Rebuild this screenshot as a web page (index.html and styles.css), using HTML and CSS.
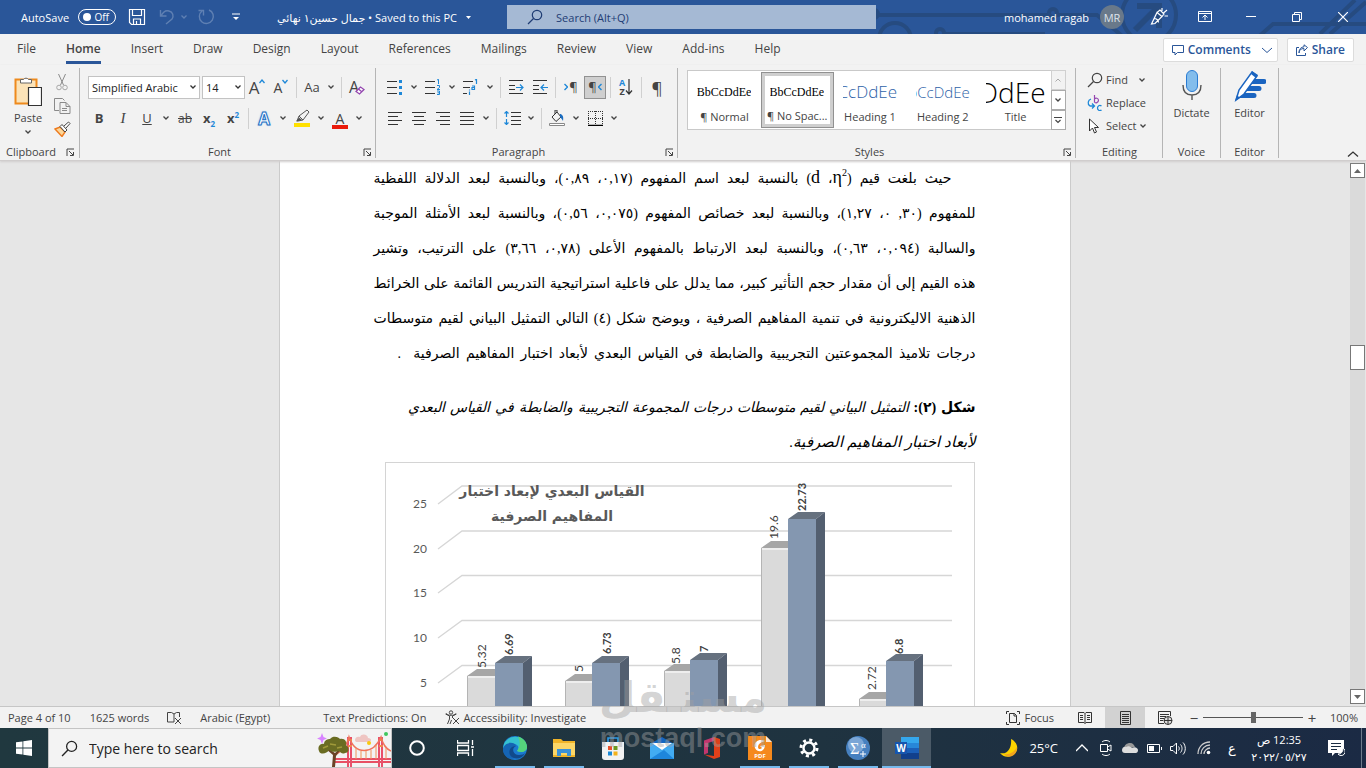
FILE: index.html
```html
<!DOCTYPE html>
<html lang="en">
<head>
<meta charset="utf-8">
<meta name="viewport" content="width=device-width, initial-scale=1.0">
<title>جمال حسين١ نهائي - Word</title>
<link rel="stylesheet" href="styles.css">
</head>
<body>
<svg class="defs" aria-hidden="true">
	<symbol id="chev" viewBox="0 0 8 8"><path d="M1.500 2.500L4 5l2.500-2.500" fill="none" stroke="currentColor" stroke-width="1.300"/></symbol>
	<symbol id="launch" viewBox="0 0 9 9"><path d="M1 8V1h7M3 3l4 4M7.500 4v3.500H4" fill="none" stroke="currentColor"/></symbol>
	<symbol id="glass" viewBox="0 0 16 16"><path d="M1 15l5.500-5.500" fill="none" stroke="currentColor" stroke-width="1.300"/><circle cx="10" cy="6" r="4.700" fill="none" stroke="currentColor" stroke-width="1.200"/></symbol>
</svg>

<header class="titlebar">
	<svg class="circuit" viewBox="0 0 491 34" aria-hidden="true">
		<g fill="none" stroke="#264b80" stroke-width="4">
			<circle cx="-1" cy="14" r="4"/><path d="M4 15h170M182 15h40l30 25"/><circle cx="178" cy="13" r="4"/>
			<circle cx="20" cy="39" r="16"/><circle cx="65" cy="33" r="4"/><path d="M70 34h100"/>
			<circle cx="274" cy="15" r="27"/><path d="M260 30l24-24M262 6h22v22" stroke-width="6"/>
			<path d="M380 40l18-16h93M445 34L480 0M455 34L491 2"/>
		</g>
	</svg>
	<label class="autosave">AutoSave <input type="checkbox" class="toggle-input"><span class="toggle"><i></i>Off</span></label>
	<button class="tb save" aria-label="Save"><svg width="18" height="18" viewBox="0 0 18 18"><path d="M1.500 1.500h15v15h-13l-2-2zM4.500 1.500v6h9v-6M5.500 16v-5h7v5M8.500 13v3" fill="none" stroke="#fff" stroke-width="1.200"/></svg></button>
	<button class="tb dim" aria-label="Undo"><svg width="16" height="18" viewBox="0 0 16 18"><path d="M1.500 2v6h6M2 8c2-4 5-6 8-5 4 1 5 5 3 8l-6 5" fill="none" stroke="currentColor" stroke-width="1.400"/></svg></button>
	<button class="tb dim" aria-label="Undo list"><svg width="8" height="8"><use href="#chev"/></svg></button>
	<button class="tb dim redo" aria-label="Redo"><svg width="18" height="18" viewBox="0 0 18 18"><path d="M12 2a7 7 0 1 1-7 1M1.500 2.500h5v5" fill="none" stroke="currentColor" stroke-width="1.400"/></svg></button>
	<button class="tb custom" aria-label="Customize toolbar"><svg width="8" height="8" viewBox="0 0 8 8"><path d="M0 1h8" stroke="#fff"/><path d="M1 4h6L4 7z" fill="#fff"/></svg></button>
	<button class="docname"><span>جمال حسين١ نهائي • Saved to this PC</span><svg width="7" height="5" viewBox="0 0 7 5"><path d="M1 1h5L3.500 4z" fill="#fff"/></svg></button>
	<label class="tellme"><svg width="16" height="16"><use href="#glass"/></svg><input type="text" placeholder="Search (Alt+Q)" aria-label="Search"></label>
	<div class="account">
		<span class="user">mohamed ragab</span>
		<button class="avatar">MR</button>
		<button class="win" aria-label="Coming soon"><svg width="18" height="18" viewBox="0 0 18 18"><path d="M1.500 16L7 4.500l5 4L5 15.500zM4.500 10.500c2 0 4 2 4 4M12 3V0M13.500 5L17 2M14.500 8H18M7 4.500L10 2l4 4-2 2.500" fill="none" stroke="#fff" stroke-width="1.200"/></svg></button>
		<button class="win" aria-label="Ribbon display options"><svg width="14" height="12" viewBox="0 0 14 12"><path d="M.5.5h13v10H.5zM.5 2.500h13M7 9V4.500M4.500 6.500L7 4l2.500 2.500" fill="none" stroke="#fff"/></svg></button>
		<button class="win" aria-label="Minimize"><svg width="10" height="10" viewBox="0 0 10 10"><path d="M0 4.500h10" stroke="#fff"/></svg></button>
		<button class="win" aria-label="Restore"><svg width="10" height="10" viewBox="0 0 10 10"><path d="M.5 2.500h7v7h-7zM2.500 2.500v-2h7v7h-2" fill="none" stroke="#fff"/></svg></button>
		<button class="win" aria-label="Close"><svg width="10" height="10" viewBox="0 0 10 10"><path d="M0 0l10 10M10 0L0 10" stroke="#fff" stroke-width="1.200"/></svg></button>
	</div>
</header>

<nav class="tabs">
	<a href="#">File</a>
	<a href="#" class="active">Home</a>
	<a href="#">Insert</a>
	<a href="#">Draw</a>
	<a href="#">Design</a>
	<a href="#">Layout</a>
	<a href="#">References</a>
	<a href="#">Mailings</a>
	<a href="#">Review</a>
	<a href="#">View</a>
	<a href="#">Add-ins</a>
	<a href="#">Help</a>
	<div class="tabs-right">
		<button class="pill"><svg width="12" height="12" viewBox="0 0 12 12"><path d="M.5 1.500h11v7h-6L3 11V8.500H.5z" fill="none" stroke="currentColor"/></svg>Comments<svg class="pill-chev" width="12" height="12" viewBox="0 0 12 12"><path d="M1 4l5 4.500L11 4" fill="none" stroke="currentColor"/></svg></button>
		<button class="pill"><svg width="12" height="12" viewBox="0 0 12 12"><path d="M3 3.500H.5v8h9V9M3 9c0-3 2-4.500 5-4.500V7l3.500-3.500L8 .8v2C5 3 3 5 3 9z" fill="none" stroke="currentColor"/></svg>Share</button>
	</div>
</nav>

<section class="ribbon">
	<div class="group clipboard">
		<div class="clip-body">
			<button class="big"><svg width="28" height="32" viewBox="0 0 28 32"><path d="M1.500 4.500h21v24h-21z" fill="#fbe3b8" stroke="#ee8a1d" stroke-width="2"/><path d="M6.500 8V4.500h3a3 3 0 0 1 5 0h3V8z" fill="#fff" stroke="#666"/><path d="M14.500 12.500h13v18h-13z" fill="#fff" stroke="#333" stroke-width="1.200"/></svg>Paste<svg width="8" height="8"><use href="#chev"/></svg></button>
			<div class="clip-small">
				<button class="ic" aria-label="Cut"><svg width="12" height="17" viewBox="0 0 12 17"><path d="M2.500 0l5 11M9.500 0l-5 11" stroke="#8a8a8a" fill="none"/><g fill="none" stroke="#a8a8a8"><circle cx="3" cy="13.500" r="2.300"/><circle cx="9" cy="13.500" r="2.300"/></g></svg></button>
				<button class="ic" aria-label="Copy"><svg width="17" height="16" viewBox="0 0 17 16"><path d="M5 12.500H.5V.5h8l2 2M6 4.500h6l4 4v7H6zM12 4.500v4h4M8 10.500h5M8 12.500h5" fill="none" stroke="#8a8a8a"/></svg></button>
				<button class="ic" aria-label="Format painter"><svg width="17" height="16" viewBox="0 0 17 16"><path d="M1 8l5-2 5 5-3 4.500z" fill="#fbd79a" stroke="#ee7a1d" stroke-width="1.400"/><path d="M6 5.500l2-2L13 9l-2 2zM10 5l4.500-4 1.500 1.500L12 7" fill="#fff" stroke="#444"/></svg></button>
			</div>
		</div>
		<div class="caption">Clipboard<button class="launch" aria-label="Clipboard settings"><svg width="9" height="9"><use href="#launch"/></svg></button></div>
	</div>

	<div class="group font">
		<div class="row">
			<select class="combo face" aria-label="Font"><option>Simplified Arabic</option></select>
			<select class="combo size" aria-label="Font size"><option>14</option></select>
			<button class="ic" aria-label="Grow font"><span class="letter-a">A</span><svg class="tick" width="6" height="5" viewBox="0 0 6 5"><path d="M.5 4L3 1l2.500 3" fill="none" stroke="#1e88d8" stroke-width="1.300"/></svg></button>
			<button class="ic" aria-label="Shrink font"><span class="letter-a small">A</span><svg class="tick" width="6" height="5" viewBox="0 0 6 5"><path d="M.5 1L3 4l2.500-3" fill="none" stroke="#1e88d8" stroke-width="1.300"/></svg></button>
			<i class="sep"></i>
			<button class="ic case">Aa</button><button class="dd" aria-label="Case options"><svg width="8" height="8"><use href="#chev"/></svg></button>
			<i class="sep"></i>
			<button class="ic" aria-label="Clear formatting"><span class="letter-a mid">A</span><svg class="eraser" width="10" height="9" viewBox="0 0 10 9"><path d="M1 5.500L5.500 1 9 3.500 4.500 8zM3.500 3L7 6" fill="#fff" stroke="#9447b0" stroke-width="1.300"/></svg></button>
		</div>
		<div class="row">
			<button class="ic"><b>B</b></button>
			<button class="ic ital"><i>I</i></button>
			<button class="ic"><u>U</u></button><button class="dd" aria-label="Underline style"><svg width="8" height="8"><use href="#chev"/></svg></button>
			<button class="ic"><s>ab</s></button>
			<button class="ic"><b>x<sub>2</sub></b></button>
			<button class="ic"><b>x<sup>2</sup></b></button>
			<i class="sep"></i>
			<button class="ic effect">A</button><button class="dd" aria-label="Effects"><svg width="8" height="8"><use href="#chev"/></svg></button>
			<button class="ic" aria-label="Highlight"><svg width="16" height="18" viewBox="0 0 16 18"><path d="M0 14h16v4H0z" fill="#ffe000"/><path d="M3 12l2-5 8-6 2 2-6 8-5 1zM5 7l4 4" fill="none" stroke="#555"/><path d="M2 12.500l3-4 3 2.500z" fill="#555"/></svg></button><button class="dd" aria-label="Highlight color"><svg width="8" height="8"><use href="#chev"/></svg></button>
			<button class="ic color">A</button><button class="dd" aria-label="Font color"><svg width="8" height="8"><use href="#chev"/></svg></button>
		</div>
		<div class="caption">Font<button class="launch" aria-label="Font settings"><svg width="9" height="9"><use href="#launch"/></svg></button></div>
	</div>

	<div class="group para">
		<div class="row">
			<button class="ic" aria-label="Bullets"><svg width="16" height="16" viewBox="0 0 16 16"><path d="M0 2.500h10M0 8.500h10M0 14.500h10" stroke="#333"/><path d="M12 1h3v3h-3zM12 7h3v3h-3zM12 13h3v3h-3z" fill="#1e88d8"/></svg></button><button class="dd" aria-label="Bullet styles"><svg width="8" height="8"><use href="#chev"/></svg></button>
			<button class="ic" aria-label="Numbering"><svg width="16" height="16" viewBox="0 0 16 16"><path d="M0 2.500h10M0 8.500h10M0 14.500h10" stroke="#333"/><path d="M12 1l1.500-.7V5M12 6.500h2.500v2L12 10.500h3M12 12h2.500v3.500H12M12.500 13.800h2" fill="none" stroke="#1e88d8"/></svg></button><button class="dd" aria-label="Number styles"><svg width="8" height="8"><use href="#chev"/></svg></button>
			<button class="ic" aria-label="Multilevel list"><svg width="16" height="16" viewBox="0 0 16 16"><path d="M0 2.500h10M0 8.500h7M0 14.500h4" stroke="#333"/><path d="M12 1l1.500-.7V5M9 7h2.500v3.500H9v-2h2.500M6.500 12.500V16M6.500 10.500v1" fill="none" stroke="#1e88d8" stroke-width="1.200"/></svg></button><button class="dd" aria-label="List styles"><svg width="8" height="8"><use href="#chev"/></svg></button>
			<i class="sep"></i>
			<button class="ic" aria-label="Increase indent"><svg width="15" height="14" viewBox="0 0 15 14"><path d="M0 .5h14M0 5.500h6M0 9.500h6M0 13.500h14" stroke="#333"/><path d="M7 7.500h7M11 4.500l3 3-3 3" fill="none" stroke="#1e88d8" stroke-width="1.200"/></svg></button>
			<button class="ic" aria-label="Decrease indent"><svg width="15" height="14" viewBox="0 0 15 14"><path d="M0 .5h14M0 5.500h6M0 9.500h6M0 13.500h14" stroke="#333"/><path d="M8 7.500h7M11 4.500l-3 3 3 3" fill="none" stroke="#1e88d8" stroke-width="1.200"/></svg></button>
			<i class="sep"></i>
			<button class="ic dir"><svg width="4" height="8" viewBox="0 0 4 8"><path d="M.5 1l3 3-3 3" fill="none" stroke="#1e88d8" stroke-width="1.400"/></svg>¶</button>
			<button class="ic dir on">¶<svg width="4" height="8" viewBox="0 0 4 8"><path d="M3.500 1l-3 3 3 3" fill="none" stroke="#1e88d8" stroke-width="1.400"/></svg></button>
			<i class="sep"></i>
			<button class="ic" aria-label="Sort"><span class="sort"><b>A</b><b>Z</b></span><svg width="8" height="18" viewBox="0 0 8 18"><path d="M4 1v15M1 12.500L4 16l3-3.500" fill="none" stroke="#333" stroke-width="1.200"/></svg></button>
			<i class="sep"></i>
			<button class="ic pilcrow">¶</button>
		</div>
		<div class="row">
			<button class="ic" aria-label="Align left"><svg width="14" height="13" viewBox="0 0 14 13"><path d="M0 .5h14M0 4.500h10M0 8.500h14M0 12.500h10" stroke="#333"/></svg></button>
			<button class="ic" aria-label="Center"><svg width="14" height="13" viewBox="0 0 14 13"><path d="M0 .5h14M2 4.500h10M0 8.500h14M2 12.500h10" stroke="#333"/></svg></button>
			<button class="ic" aria-label="Align right"><svg width="14" height="13" viewBox="0 0 14 13"><path d="M0 .5h14M4 4.500h10M0 8.500h14M4 12.500h10" stroke="#333"/></svg></button>
			<button class="ic" aria-label="Justify"><svg width="14" height="13" viewBox="0 0 14 13"><path d="M0 .5h14M0 4.500h14M0 8.500h14M0 12.500h14" stroke="#333"/></svg></button><button class="dd" aria-label="Justify options"><svg width="8" height="8"><use href="#chev"/></svg></button>
			<i class="sep"></i>
			<button class="ic" aria-label="Line spacing"><svg width="17" height="14" viewBox="0 0 17 14"><path d="M7 1.500h10M7 5.500h10M7 9.500h10M7 13.500h10" stroke="#333"/><path d="M2.500 0v6M.5 2.500l2-2 2 2M2.500 8v6M.5 11.500l2 2 2-2" fill="none" stroke="#1e88d8" stroke-width="1.200"/></svg></button><button class="dd" aria-label="Spacing options"><svg width="8" height="8"><use href="#chev"/></svg></button>
			<i class="sep"></i>
			<button class="ic" aria-label="Shading"><svg width="16" height="16" viewBox="0 0 16 16"><path d="M.5 13.500h15v2H.5z" fill="#fff" stroke="#888"/><path d="M3 7l5-5 4 5-5 4.500zM8 2V0H6v4" fill="none" stroke="#333"/><path d="M11 4c2 0 4 2 3 7-1-2-2-3-3-4z" fill="#1b6dc1"/></svg></button><button class="dd" aria-label="Shading color"><svg width="8" height="8"><use href="#chev"/></svg></button>
			<button class="ic" aria-label="Borders"><svg width="15" height="15" viewBox="0 0 15 15"><path d="M0 .5h15M.5 0v14M14.500 0v14M0 7.500h15M7.500 0v14" stroke="#333" stroke-dasharray="1 1"/><path d="M0 14.500h15" stroke="#000" stroke-width="1.500"/></svg></button><button class="dd" aria-label="Border options"><svg width="8" height="8"><use href="#chev"/></svg></button>
		</div>
		<div class="caption">Paragraph<button class="launch" aria-label="Paragraph settings"><svg width="9" height="9"><use href="#launch"/></svg></button></div>
	</div>

	<div class="group styles">
		<div class="gallery">
			<button class="style"><span class="sample serif"><span>AaBbCcDdEe</span></span><span class="name">¶ Normal</span></button>
			<button class="style chosen"><span class="sample serif"><span>AaBbCcDdEe</span></span><span class="name">¶ No Spac...</span></button>
			<button class="style"><span class="sample h1"><span>AaBbCcDdEe</span></span><span class="name">Heading 1</span></button>
			<button class="style"><span class="sample h2"><span>AaBbCcDdEe</span></span><span class="name">Heading 2</span></button>
			<button class="style"><span class="sample title"><span>DdEe</span></span><span class="name">Title</span></button>
			<div class="spin">
				<button class="off" aria-label="Row up"><svg width="8" height="8" viewBox="0 0 8 8"><path d="M1.500 5.500L4 3l2.500 2.500" fill="none" stroke="currentColor"/></svg></button>
				<button aria-label="Row down"><svg width="8" height="8"><use href="#chev"/></svg></button>
				<button aria-label="More styles"><svg width="8" height="8" viewBox="0 0 8 8"><path d="M0 1.500h8M1.500 4L4 6.500 6.500 4" fill="none" stroke="currentColor" stroke-width="1.200"/></svg></button>
			</div>
		</div>
		<div class="caption">Styles<button class="launch" aria-label="Styles pane"><svg width="9" height="9"><use href="#launch"/></svg></button></div>
	</div>

	<div class="group editing">
		<button class="line"><svg width="16" height="16"><use href="#glass"/></svg>Find<svg class="gap" width="8" height="8"><use href="#chev"/></svg></button>
		<button class="line"><svg width="16" height="16" viewBox="0 0 16 16"><path d="M7.500 0v7.500M7.500 4c1-1.500 4-1 4 1.300S8.500 8.500 7.500 7" fill="none" stroke="#9447b0" stroke-width="1.200"/><path d="M14.500 11c-2-1.500-4 0-4 2s2 3.500 4 2" fill="none" stroke="#1e88d8" stroke-width="1.300"/><path d="M4 4C1 5 0 9 3 11h4M5 8.500L7.500 11 5 13.500" fill="none" stroke="#1e88d8" stroke-width="1.300"/></svg>Replace</button>
		<button class="line"><svg width="16" height="16" viewBox="0 0 16 16"><path d="M2.500 1v12l3-3 2 5 2-1-2-4.500h4z" fill="#fff" stroke="#333"/></svg>Select<svg width="8" height="8"><use href="#chev"/></svg></button>
		<div class="caption">Editing</div>
	</div>
	<div class="group one">
		<button class="big"><svg width="20" height="32" viewBox="0 0 20 32"><rect x="4.500" y=".5" width="11" height="21" rx="5.500" fill="#83bdec" stroke="#2b7cd3"/><path d="M1 15c0 6 3 10 9 10s9-4 9-10M10 25v5" fill="none" stroke="#555" stroke-width="1.400"/></svg>Dictate</button>
		<div class="caption">Voice</div>
	</div>
	<div class="group one">
		<button class="big"><svg width="32" height="32" viewBox="0 0 32 32"><path d="M18 9h12a2.500 2.500 0 0 1 0 5H14zM14 16h11a2.500 2.500 0 0 1 0 5H11zM10 23h10a2.500 2.500 0 0 1 0 5H4z" fill="#1a64c0"/><path d="M2 30l3-10L18 2l5 4L10 24z" fill="#fff" stroke="#1a64c0" stroke-width="1.500"/><path d="M18 1l6 4-2 3-5-4zM1 31l2-6 3 3z" fill="#1a64c0"/></svg>Editor</button>
		<div class="caption">Editor</div>
	</div>
	<button class="collapse" aria-label="Collapse the ribbon"><svg width="12" height="8" viewBox="0 0 12 8"><path d="M1 6.500L6 2l5 4.500" fill="none" stroke="#333" stroke-width="1.300"/></svg></button>
</section>

<main class="workspace">
	<div class="canvas">
		<article class="page" lang="ar" dir="rtl">
			<p class="body-text">
				<span class="ln first">حيث بلغت قيم (<bdi>η<sup>2</sup></bdi>، <bdi>d</bdi>) بالنسبة لبعد اسم المفهوم (٠,١٧، ٠,٨٩)، وبالنسبة لبعد الدلالة اللفظية</span>
				<span class="ln">للمفهوم (٣٠, ٠، ١,٢٧)، وبالنسبة لبعد خصائص المفهوم (٠,٠٧٥، ٠,٥٦)، وبالنسبة لبعد الأمثلة الموجبة</span>
				<span class="ln">والسالبة (٠,٠٩٤، ٠,٦٣)، وبالنسبة لبعد الارتباط بالمفهوم الأعلى (٠,٧٨، ٣,٦٦) على الترتيب، وتشير</span>
				<span class="ln">هذه القيم إلى أن مقدار حجم التأثير كبير، مما يدلل على فاعلية استراتيجية التدريس القائمة على الخرائط</span>
				<span class="ln">الذهنية الاليكترونية في تنمية المفاهيم الصرفية ، ويوضح شكل (٤) التالي التمثيل البياني لقيم متوسطات</span>
				<span class="ln end">درجات تلاميذ المجموعتين التجريبية والضابطة في القياس البعدي لأبعاد اختبار المفاهيم الصرفية&nbsp; .</span>
			</p>
			<p class="figure-title">
				<span class="ln cap"><b>شكل (٢):</b> <em>التمثيل البياني لقيم متوسطات درجات المجموعة التجريبية والضابطة في القياس البعدي</em></span>
				<span class="ln last"><em>لأبعاد اختبار المفاهيم الصرفية.</em></span>
			</p>
			<svg class="chart" viewBox="0 0 590 300" direction="ltr">
				<rect x=".5" y=".5" width="589" height="299" fill="#fff" stroke="#d4d4d4"/>
				<g fill="none" stroke="#d6d6d6" stroke-width="1.300">
					<path d="M53 42L77 24H567M53 87L77 69H567M53 131L77 113.500H567M53 176L77 158.500H567M53 221L77 203.500H567"/>
				</g>
				<g class="axis">
					<text x="42" y="46">25</text><text x="42" y="91">20</text><text x="42" y="135">15</text><text x="42" y="180">10</text><text x="42" y="225">5</text>
				</g>
				<g class="chart-title" direction="rtl">
					<text x="167" y="34">القياس البعدي لإبعاد اختبار</text>
					<text x="167" y="59">المفاهيم الصرفية</text>
				</g>
				<!-- first series -->
				<g fill="#dadada">
					<path d="M82 214h28v90H82zM180 219h28v90h-28zM279 209h28v90h-28zM376 86h28v214h-28zM474 237h28v70h-28z"/>
				</g>
				<g fill="#a6a6a6">
					<path d="M82 214l10-7h18v7zM180 219l10-7h18v7zM279 209l10-7h18v7zM376 86l10-7h18v7zM474 237l10-7h18v7z"/>
				</g>
				<path d="M82.500 300V214M180.500 300V219M279.500 300V209M376.500 300V86M474.500 300V237" stroke="#b4b4b4"/>
				<path d="M83 215h27M181 220h27M280 210h27M377 87h27M475 238h27" stroke="#eee" stroke-width="2"/>
				<!-- second series -->
				<g fill="#8497b0">
					<path d="M110 201h28v99h-28zM207 201h28v99h-28zM305 198h28v102h-28zM403 57h28v243h-28zM501 199h28v101h-28z"/>
				</g>
				<g fill="#66717f">
					<path d="M110 201l10-7h27l-9 7zM207 201l10-7h27l-9 7zM305 198l10-7h27l-9 7zM403 57l10-7h27l-9 7zM501 199l10-7h27l-9 7z"/>
				</g>
				<g fill="#535f70">
					<path d="M138 201l9-7v106h-9zM235 201l9-7v106h-9zM333 198l9-7v109h-9zM431 57l9-7v250h-9zM529 199l9-7v108h-9z"/>
				</g>
				<g class="values">
					<text transform="translate(101 206) rotate(-90)">5.32</text>
					<text transform="translate(198 210) rotate(-90)">5</text>
					<text transform="translate(295 202) rotate(-90)">5.8</text>
					<text transform="translate(393 77) rotate(-90)">19.6</text>
					<text transform="translate(491 228) rotate(-90)">2.72</text>
				</g>
				<g class="values strong">
					<text transform="translate(128 193) rotate(-90)">6.69</text>
					<text transform="translate(226 192) rotate(-90)">6.73</text>
					<text transform="translate(323 190) rotate(-90)">7</text>
					<text transform="translate(421 49) rotate(-90)">22.73</text>
					<text transform="translate(518 192) rotate(-90)">6.8</text>
				</g>
			</svg>
		</article>
	</div>
	<div class="scrollbar">
		<button aria-label="Scroll up"><svg width="7" height="4" viewBox="0 0 7 4"><path d="M0 4h7L3.500 0z" fill="#666"/></svg></button>
		<div class="track"><div class="thumb"></div></div>
		<button aria-label="Scroll down"><svg width="7" height="4" viewBox="0 0 7 4"><path d="M0 0h7L3.500 4z" fill="#666"/></svg></button>
	</div>
</main>

<footer class="status">
	<span class="st pages">Page 4 of 10</span>
	<span class="st words">1625 words</span>
	<button class="st proof" aria-label="Proofing"><svg width="15" height="14" viewBox="0 0 15 14"><path d="M7 11H.5V1.500h4L7 3l2.500-1.500h3V6M7 3v8M8 7l6 6M14 7l-6 6" fill="none" stroke="#444"/></svg></button>
	<button class="st lang">Arabic (Egypt)</button>
	<button class="st pred">Text Predictions: On</button>
	<button class="st acc"><svg width="15" height="15" viewBox="0 0 15 15"><circle cx="6" cy="2.500" r="1.700" fill="none" stroke="#444"/><path d="M.5 4l4 2v3L2.500 14M11.500 4l-4 2v2M1 3.500c3 2.500 8 2.500 10 0M5 14l1.500-4M8 8l6 6M14 8l-6 6" fill="none" stroke="#444"/></svg>Accessibility: Investigate</button>
	<div class="views">
		<button class="focus"><svg width="14" height="14" viewBox="0 0 14 14"><path d="M3 .5H.5V3M11 .5h2.500V3M3 13.500H.5V11M11 13.500h2.500V11M3.500 2.500h5l2 2v7h-7zM8 2.500V5h2.500" fill="none" stroke="#333"/></svg>Focus</button>
		<button class="view" aria-label="Read mode"><svg width="14" height="12" viewBox="0 0 14 12"><path d="M.5.5H6l1 1 1-1h5.500v10H8l-1 1-1-1H.5zM7 1.500v10M2 3.500h3M2 5.500h3M2 7.500h3M9 3.500h3M9 5.500h3M9 7.500h3" fill="none" stroke="#333"/></svg></button>
		<button class="view on" aria-label="Print layout"><svg width="11" height="14" viewBox="0 0 11 14"><path d="M.5.5h10v13H.5zM2 3.500h7M2 5.500h7M2 7.500h7M2 9.500h7M2 11.500h7" fill="none" stroke="#333"/></svg></button>
		<button class="view" aria-label="Web layout"><svg width="15" height="14" viewBox="0 0 15 14"><path d="M6 12.500H.5V.5h12V5M2 3.500h9M2 5.500h6M2 7.500h4M2 9.500h3" fill="none" stroke="#333"/><circle cx="10" cy="9.500" r="4" fill="#ddd" stroke="#333"/><path d="M6 9.500h8M10 5.500v8" stroke="#333"/></svg></button>
		<button class="zoom-step">−</button>
		<input type="range" class="zoom" min="0" max="200" value="101" aria-label="Zoom">
		<button class="zoom-step">+</button>
		<span class="pct">100%</span>
	</div>
</footer>

<div class="taskbar">
	<button class="start" aria-label="Start"><svg width="16" height="16" viewBox="0 0 16 16"><path d="M0 2.300L6.500 1.400v6.200H0zM7.300 1.300L16 0v7.600H7.300zM0 8.400h6.500v6.200L0 13.700zM7.300 8.400H16V16l-8.700-1.300z" fill="#fff"/></svg></button>
	<label class="search"><svg width="17" height="17"><use href="#glass"/></svg><input type="text" placeholder="Type here to search" aria-label="Type here to search">
		<svg class="bridge" width="74" height="36" viewBox="0 0 74 36" aria-hidden="true">
			<path d="M18 28h56M18 31h56" stroke="#e84f63" stroke-width="2"/>
			<path d="M31 6v30M62 6v30M34 6v30M65 6v30" stroke="#e8506a" stroke-width="2"/><path d="M31 9h4M31 15h4M62 9h4M62 15h4" stroke="#f08a4a" stroke-width="2"/>
			<path d="M18 24C26 20 30 14 32 6c6 18 24 18 32 0 2 8 5 12 10 14" fill="none" stroke="#f0735a" stroke-width="1.500"/>
			<path d="M39 17v11M44 20v8M49 20v8M54 19v9M59 14v14M69 17v11" stroke="#f0935a"/>
			<path d="M38 9c0-3 3-4 5-3 1-4 8-3 8 1 4 0 4 4 0 4H40c-2 0-2-2-2-2z" fill="#efc5c2"/>
			<circle cx="52" cy="12" r="2" fill="#f8c90e"/><circle cx="69" cy="3" r="2" fill="#3fc75f"/>
			<path d="M5 2l1.500 4L10 7.500 6.500 9 5 13 3.500 9 0 7.500 3.500 6z" fill="#d884ff"/>
			<path d="M15 36l1-12-7-6 3 0 6 4 5-5 2 0-6 8-1 11z" fill="#6b4226"/>
			<path d="M2 20c-2-5 2-8 5-7 0-4 4-5 6-5 3-4 9-2 10 0 5-1 7 3 6 6 4 3 3 8-1 8-3 2-5-2-7-2-5 2-7 0-9-1-2 4-9 5-10 1z" fill="#6a6c22"/>
			<path d="M6 17l5-2M13 13l6 1M20 17l5-1" stroke="#a19a3a" stroke-width="1.500"/>
		</svg>
	</label>
	<div class="apps">
		<button class="app" aria-label="Cortana"><svg width="16" height="16" viewBox="0 0 16 16"><circle cx="8" cy="8" r="6.800" fill="none" stroke="#fff" stroke-width="2"/></svg></button>
		<button class="app" aria-label="Task view"><svg width="17" height="16" viewBox="0 0 17 16"><path d="M.5 0v3h11V0M.5 5.500h11v5H.5zM.5 16v-3h11v3M15.500 0v5M15.500 9v7M14 7h3" fill="none" stroke="#fff" stroke-width="1.300"/></svg></button>
		<button class="app run" aria-label="Edge"><svg width="24" height="24" viewBox="0 0 24 24"><circle cx="12" cy="12" r="12" fill="#1b7ad0"/><path d="M1 8C5-2 22-2 24 11c0 5-6 6-10 4 3-3 1-7-3-7C7 7 3 9 0 13z" fill="#35c1d0"/><path d="M15 .5C21 2 24 7 24 11c0 5-6 6-10 4 4-6 3-9 1-14.500z" fill="#55d37c"/><path d="M0 12c3-7 12-6 13-2-5 1-6 8-1 12-6 3-13-3-12-10z" fill="#1565b4"/><path d="M13 10c-5 2-3 9 3 9 3 0 5-1 6-2-3 7-12 7-15 2-2-5 1-9 6-9z" fill="#114a8b"/></svg></button>
		<button class="app run" aria-label="File Explorer"><svg width="22" height="18" viewBox="0 0 22 18"><path d="M0 0h8l2 2h12v16H0z" fill="#f0b429"/><path d="M0 4h22v12H0z" fill="#fbd667"/><path d="M4 17v-7h14v7h-4v-3H8v3z" fill="#3a91d8"/></svg></button>
		<button class="app" aria-label="Microsoft Store"><svg width="24" height="24" viewBox="0 0 24 24"><path d="M7 7V2h10v5" fill="none" stroke="#2f9be8" stroke-width="1.600"/><path d="M1 6h22v15a3 3 0 0 1-3 3H4a3 3 0 0 1-3-3z" fill="#f2f2f2"/><path d="M7 10h4v4H7z" fill="#e8502a"/><path d="M12.500 10h4v4h-4z" fill="#6d9a1f"/><path d="M7 15.500h4v4H7z" fill="#1a8ad8"/><path d="M12.500 15.500h4v4h-4z" fill="#f3b21a"/></svg></button>
		<button class="app" aria-label="Mail"><svg width="24" height="22" viewBox="0 0 24 22"><path d="M0 7l12-7 12 7z" fill="#1466c0"/><path d="M0 6h24v16H0z" fill="#3ca4ee"/><path d="M2 6h20l-10 7z" fill="#fff"/><path d="M0 6l12 8L24 6v16H0z" fill="#42acf2"/><path d="M0 22l14-9 10 9z" fill="#1e86dc"/></svg></button>
		<button class="app" aria-label="Office"><svg width="20" height="24" viewBox="0 0 20 24"><path d="M13 1L3 4.500v14l4-1.500V7l6-2z" fill="#c2366d"/><path d="M13 1l6 2v18l-6 2-10-4.500 10 1.500z" fill="#e0401a"/></svg></button>
		<button class="app run" aria-label="PDF reader"><svg width="24" height="24" viewBox="0 0 24 24"><path d="M0 0h18l6 6v18H0z" fill="#f5891d"/><path d="M18 0v6h6z" fill="#fff" opacity=".8"/><path d="M17 5c-7-3-12 2-10 7 3 6 10 3 10-3l-5 1 2 2c-2 2-4 1-4-1 0-3 3-5 7-6z" fill="#fff"/><text x="12" y="22" class="pdf">PDF</text></svg></button>
		<button class="app run" aria-label="Settings"><svg width="20" height="20" viewBox="0 0 20 20"><circle cx="10" cy="10" r="5.500" fill="none" stroke="#fff" stroke-width="2.400"/><circle cx="10" cy="10" r="8" fill="none" stroke="#fff" stroke-width="3" stroke-dasharray="3 3.280"/></svg></button>
		<button class="app run" aria-label="Math editor"><svg width="24" height="24" viewBox="0 0 24 24"><circle cx="12" cy="12" r="12" fill="#4680bf"/><circle cx="10" cy="9" r="8" fill="#7ba6d6"/><text x="4" y="18" class="sigma">Σ</text><text x="15" y="12" class="alpha">α</text><path d="M17 15v6M14 18h6" stroke="#fff"/></svg></button>
		<button class="app run current" aria-label="Word"><svg width="24" height="22" viewBox="0 0 24 22"><path d="M6 0h18v6H6z" fill="#35a7ec"/><path d="M6 6h18v5H6z" fill="#2787d8"/><path d="M6 11h18v5H6z" fill="#1b5fb8"/><path d="M6 16h18v6H6z" fill="#12408c"/><path d="M0 5h12v12H0z" fill="#1655ae"/><text x="6" y="15" class="w">W</text></svg></button>
	</div>
	<div class="tray">
		<button class="weather"><svg width="18" height="18" viewBox="0 0 18 18"><path d="M11 0c8 4 8 13 2 16-5 3-10 2-13-2 8 2 12-6 11-14z" fill="#fdd300"/><path d="M4 15c6 1 10-2 13-7 0 10-9 12-13 7z" fill="#f2a51d"/></svg>25°C</button>
		<button class="ti" aria-label="Show hidden icons"><svg width="12" height="8" viewBox="0 0 12 8"><path d="M0 7l6-6 6 6" fill="none" stroke="#fff" stroke-width="1.300"/></svg></button>
		<button class="ti" aria-label="Meet now"><svg width="12" height="16" viewBox="0 0 12 16"><path d="M.5 4.500h7v7h-7zM7.500 7l3.500-2v6L7.500 9M2 2c2-2 6-2 8 0M2 14c2 2 6 2 8 0" fill="none" stroke="#fff"/></svg></button>
		<button class="ti" aria-label="OneDrive"><svg width="16" height="10" viewBox="0 0 16 10"><path d="M2 6c0-4 3-6 6-6 3 0 4 2 5 4z" fill="#999"/><path d="M0 7c0-3 3-4 4-3 3-2 5 0 6 1 3-2 6 0 6 2 0 3-2 3-3 3H3C1 10 0 9 0 7z" fill="#ddd"/></svg></button>
		<button class="ti" aria-label="Battery"><svg width="15" height="9" viewBox="0 0 15 9"><path d="M.5.5h12v8H.5zM14.500 3v3" fill="none" stroke="#fff"/><path d="M2 2h5v5H2z" fill="#fff"/></svg></button>
		<button class="ti" aria-label="Volume"><svg width="16" height="13" viewBox="0 0 16 13"><path d="M.5 4.500H3l3.500-3.500v11L3 8.500H.5zM8.500 4.500c1 1 1 3 0 4M10.500 2.500c2 2 2 6 0 8M13 .5c3 3 3 9 0 12" fill="none" stroke="#fff"/></svg></button>
		<button class="ti wifi" aria-label="Network"><svg width="14" height="14" viewBox="0 0 14 14"><g fill="none" stroke="#ccc" stroke-width="1.300"><path d="M1 13C1 6 6 1 13 1M4 13c0-5 4-9 9-9M7 13c0-3 3-6 6-6"/></g><circle cx="11.500" cy="11.500" r="1.800" fill="#fff"/></svg></button>
		<button class="ti kb">ع</button>
		<button class="clock"><span dir="rtl"><bdi>12:35</bdi> ص</span><span>٢٠٢٢/٠٥/٢٧</span></button>
		<button class="note" aria-label="Notifications"><svg width="17" height="17" viewBox="0 0 17 17"><path d="M0 0h16v13H7l-3 3v-3H0z" fill="#fff"/><path d="M3 3.500h10M3 6.500h10M3 9.500h6" stroke="#1c2c43"/><path d="M15 8a4 4 0 1 1-5 6c3 0 5-2 5-6z" fill="#1c2c43" stroke="#fff"/></svg></button>
		<i class="peek"></i>
	</div>
</div>

<div class="watermark" aria-hidden="true"><span class="wm-ar">مستـقل</span><span class="wm-en">mostaql.com</span></div>
</body>
</html>
```
FILE: styles.css
```css
* {
	box-sizing: border-box;
}

body {
	margin: 0;
	height: 100vh;
	display: flex;
	flex-direction: column;
	overflow: hidden;
	position: relative;
	font-family: "Open Sans", "Noto Sans", "DejaVu Sans", sans-serif;
	font-size: 11px;
	color: #444;
	background: #f2f2f2;
}

button, input, select {
	font: inherit;
	color: inherit;
	border: 0;
	padding: 0;
	margin: 0;
	background: none;
	white-space: nowrap;
}

button {
	display: flex;
	align-items: center;
	justify-content: center;
	flex: none;
}

svg {
	flex: none;
	display: block;
}

a {
	color: inherit;
	text-decoration: none;
}

.defs {
	display: none;
}

/* title bar */
.titlebar {
	position: relative;
	height: 34px;
	flex: none;
	display: flex;
	align-items: center;
	padding-left: 21px;
	background: #2a5699;
	color: #fff;
}

.circuit {
	position: absolute;
	right: 0;
	top: 0;
	width: 491px;
	height: 34px;
}

.autosave {
	display: flex;
	align-items: center;
	gap: 9px;
	font-size: 11px;
}

.toggle-input {
	position: absolute;
	opacity: 0;
}

.toggle {
	display: flex;
	align-items: center;
	justify-content: space-between;
	width: 38px;
	height: 16px;
	padding: 0 6px 0 4px;
	border: 1px solid #fff;
	border-radius: 8px;
	font-size: 10px;
}

.toggle i {
	width: 8px;
	height: 8px;
	border-radius: 50%;
	background: #fff;
}

.save { margin: 0 13px 0 12px; }
.dim { color: #5f80b3; }
.redo { margin: 0 17px 0 10px; }
.dim + .dim { margin-left: 5px; }
.dim + .redo { margin-left: 9px; }

.docname {
	width: 200px;
	margin-left: 37px;
	gap: 8px;
	justify-content: flex-start;
}

.tellme {
	position: relative;
	display: flex;
	align-items: center;
	gap: 13px;
	flex: 0 0 27vw;
	height: 24px;
	margin-left: 30px;
	padding-left: 20px;
	background: #a5b9d4;
	color: #1f3d74;
}

.tellme input {
	flex: 1;
	min-width: 0;
}

input::placeholder {
	color: inherit;
	opacity: 1;
}

.account {
	position: relative;
	display: flex;
	align-items: center;
	margin-left: auto;
}

.avatar {
	width: 24px;
	height: 24px;
	margin: 0 12px 0 11px;
	border-radius: 50%;
	background: #69798a;
	color: #dde3ea;
}

.win {
	width: 46px;
	height: 34px;
}

/* tabs */
.tabs {
	flex: none;
	display: flex;
	align-items: center;
	gap: 30px;
	height: 31px;
	padding-left: 17px;
	font-size: 12px;
}

.tabs > a {
	line-height: 24px;
	padding-top: 1px;
	border-bottom: 3px solid transparent;
}

.tabs > a.active {
	font-weight: 600;
	border-bottom-color: #2a5699;
}

.tabs-right {
	display: flex;
	gap: 9px;
	margin-left: auto;
	padding-right: 12px;
}

.pill {
	height: 24px;
	gap: 4px;
	padding: 0 8px;
	border: 1px solid #dcdcdc;
	border-radius: 2px;
	background: #fff;
	color: #2a5699;
	font-weight: 600;
}

.pill-chev {
	margin: 0 -4px 0 6px;
}

/* ribbon */
.ribbon {
	position: relative;
	z-index: 1;
	flex: none;
	display: flex;
	align-items: stretch;
	height: 96px;
	padding: 3px 0 2px;
	border-bottom: 1px solid #d0cdcd;
	box-shadow: 0 1px 2px #d0cdcd;
}

.group {
	display: flex;
	flex-direction: column;
	flex: none;
	border-right: 1px solid #b5b5b5;
	padding: 7px 7px 0;
}

.group.clipboard { width: 80px; padding: 3px 4px 0 14px; }
.group.font { width: 296px; padding-right: 3px; }
.group.para { width: 302px; padding-right: 3px; }
.group.styles { flex: 0 1 398px; padding: 2px 3px 0 9px; min-width: 0; }
.group.editing { width: 87px; padding: 0 10px 0 11px; }
.group.one { width: 58px; padding: 2px 0 0; }

.caption {
	display: flex;
	justify-content: center;
	position: relative;
	margin-top: auto;
	line-height: 12px;
}

.font .caption,
.para .caption,
.styles .caption {
	padding-right: 20px;
}

.clipboard .caption {
	margin-left: -8px;
	justify-content: flex-start;
}

.launch {
	position: absolute;
	right: 0;
	top: 2px;
}

.clip-body {
	display: flex;
	gap: 10px;
}

.clip-small {
	display: flex;
	flex-direction: column;
}

.big {
	flex-direction: column;
	line-height: 15px;
	gap: 3px;
}

.row {
	display: flex;
	align-items: center;
	height: 24px;
	margin-bottom: 7px;
}

.ic {
	position: relative;
	width: 24px;
	height: 24px;
	font-size: 13px;
}

.clip-small .ic { width: 20px; height: 23px; }

.dd { width: 14px; height: 24px; }

.sep {
	width: 1px;
	height: 21px;
	margin: 0 3px;
	background: #d0d0d0;
}

.combo {
	height: 23px;
	padding: 0 3px;
	border: 1px solid #c3c3c3;
	border-radius: 0;
	appearance: none;
	color: #222;
	background: #fff url("data:image/svg+xml,%3Csvg xmlns='http://www.w3.org/2000/svg' width='8' height='8'%3E%3Cpath d='M1.500 2.500L4 5l2.500-2.500' fill='none' stroke='%23333' stroke-width='1.300'/%3E%3C/svg%3E") no-repeat right 2px center;
}

.face { width: 112px; margin: 0 2px 0 1px; }
.size { width: 43px; }

.letter-a { font-size: 17px; }
.letter-a.small { font-size: 14px; }
.letter-a.mid { font-size: 16px; }

.tick {
	align-self: flex-start;
	margin-top: 4px;
}

.eraser {
	align-self: flex-end;
	margin: 0 0 4px -4px;
}

.ital {
	font-family: "Liberation Serif", serif;
	font-size: 15px;
}

.ic s { font-size: 12px; }
.ic sub, .ic sup {
	font-size: 8px;
	line-height: 0;
	color: #1e88d8;
}

.effect {
	font-size: 17px;
	font-weight: 700;
	color: #fff;
	-webkit-text-stroke: 1px #1d6fc4;
	text-shadow: 0 0 2px #4da3ea;
}

.color {
	font-size: 14px;
	line-height: 15px;
}

.color::after {
	content: "";
	position: absolute;
	left: 4px;
	right: 4px;
	bottom: 1px;
	height: 4px;
	background: #ea1b0b;
}

.sort {
	display: flex;
	flex-direction: column;
	font-size: 9px;
	line-height: 9px;
}

.sort b:first-child { color: #1e88d8; }

.dir { gap: 1px; }

.dir.on {
	width: 22px;
	height: 23px;
	margin: 0 1px;
	border: 1px solid #919191;
	background: #cfcfcf;
}

.pilcrow { font-size: 17px; }

.gallery {
	display: flex;
	height: 60px;
	margin-right: 6px;
	border: 1px solid #c9c9c9;
	background: #fff;
}

.style {
	flex: 1 1 0;
	min-width: 0;
	flex-direction: column;
	padding: 5px 4px 0;
	border: 1px solid transparent;
}

.style.chosen {
	height: 56px;
	margin-top: 1px;
	border: 1px solid #919191;
	box-shadow: inset 0 0 0 3px #cfcfcf;
}

/* only the tail of the sample fits in the cell */
.sample {
	display: flex;
	justify-content: flex-end;
	width: 54px;
	height: 28px;
	line-height: 28px;
	overflow: hidden;
	color: #000;
}

.name { line-height: 22px; }

.serif { font-family: "Liberation Serif", serif; font-size: 12px; }
.h1 { color: #2e62a8; font-size: 17px; font-weight: 300; }
.h2 { color: #2e62a8; font-size: 15px; font-weight: 300; }
.title { width: 60px; font-size: 28px; font-weight: 300; }

.spin {
	display: flex;
	flex-direction: column;
	width: 15px;
	flex: none;
	margin: -1px;
}

.spin button {
	flex: 1;
	border: 1px solid #ababab;
}

.spin .off {
	color: #aaa;
	border-color: #d0d0d0;
	background: #f2f2f2;
}

.line {
	justify-content: flex-start;
	gap: 3px;
	height: 23px;
}

.line .gap { margin-left: 7px; }

.collapse {
	align-self: flex-end;
	margin: 0 7px 0 auto;
}

/* document */
.workspace {
	flex: 1;
	min-height: 0;
	display: flex;
	background: #e6e6e6;
}

.canvas {
	flex: 1;
	overflow: hidden;
	display: flex;
	justify-content: center;
}

.page {
	width: 792px;
	height: 1120px;
	flex: none;
	padding: 0 94px;
	background: #fff;
	border: 1px solid #cbcbcb;
	border-top: 0;
	color: #000;
	font-family: "Liberation Serif", "DejaVu Sans", serif;
	font-size: 14px;
}

.page p { margin: 0; }

.ln {
	display: block;
	line-height: 35px;
	text-align: justify;
	text-align-last: justify;
	white-space: nowrap;
}

.ln.first { padding-right: 24px; }
.ln.end { padding-left: 24px; }
.ln.last { text-align-last: start; font-size: 15px; }
.ln.cap { padding-left: 34px; }
.ln sup { font-size: 10px; line-height: 0; }
.ln bdi { font-size: 18px; line-height: 0; }

.page .figure-title {
	padding-top: 19px;
	margin-bottom: 2px;
}

.chart {
	width: 590px;
	margin: 2px 1px 0 0;
}

.axis text {
	font: 12px Lato, sans-serif;
	fill: #595959;
	text-anchor: end;
}

.values text {
	font: 12px Lato, sans-serif;
	fill: #404040;
}

.values.strong text {
	font-size: 11px;
	font-weight: 700;
}

.chart-title text {
	font: 700 14px "DejaVu Sans", sans-serif;
	fill: #595959;
	text-anchor: middle;
}

.scrollbar {
	width: 17px;
	flex: none;
	display: flex;
	flex-direction: column;
	padding: 2px 1px;
}

.scrollbar button {
	height: 15px;
	border: 1px solid #777;
	background: #fff;
}

.track {
	flex: 1;
	padding-top: 167px;
	background: #dadada;
}

.thumb {
	height: 25px;
	border: 1px solid #777;
	background: #fff;
}

/* status bar */
.status {
	flex: none;
	display: flex;
	align-items: center;
	height: 22px;
	padding-left: 8px;
	border-top: 1px solid #c6c6c6;
}

.words { margin-left: 19px; }
.proof { margin-left: 18px; }
.lang { margin-left: 18px; }
.pred { margin-left: 53px; }
.acc { margin-left: 19px; gap: 3px; }

.views {
	display: flex;
	align-items: center;
	align-self: stretch;
	margin-left: auto;
	padding-right: 8px;
}

.focus {
	gap: 4px;
	margin-right: 11px;
}

.view {
	width: 40px;
	height: 21px;
}

.view.on { background: #d2d2d2; }

.zoom-step {
	width: 18px;
	font-size: 15px;
	line-height: 18px;
}

.zoom {
	width: 100px;
	height: 12px;
	appearance: none;
	background: linear-gradient(#555, #555) no-repeat center / 100% 1px;
}

.zoom::-webkit-slider-thumb {
	appearance: none;
	width: 5px;
	height: 11px;
	background: #666;
}

.pct { margin-left: 9px; }

/* taskbar */
.taskbar {
	flex: none;
	display: flex;
	height: 40px;
	background: linear-gradient(90deg, #20383f, #1f3340 60%, #1b2a44);
	color: #fff;
}

.start { width: 48px; }

.search {
	display: flex;
	align-items: center;
	gap: 11px;
	width: 344px;
	padding-left: 12px;
	border: 1px solid #c4c4c4;
	background: #f3f3f3;
	color: #222;
	font-size: 14px;
}

.search input {
	flex: 1;
	min-width: 0;
}

.bridge {
	align-self: flex-end;
}

.apps { display: flex; }

.app {
	width: 49px;
	border-bottom: 2px solid transparent;
	border-top: 2px solid transparent;
}

.app.run {
	background: linear-gradient(#76b9ed, #76b9ed) no-repeat center bottom / 40px 2px border-box;
}

.app.run.current {
	background: linear-gradient(#76b9ed, #76b9ed) no-repeat center bottom / 100% 2px border-box, #4b5a67;
}

.pdf { font: 700 6px "Open Sans", sans-serif; fill: #fff; text-anchor: middle; }
.w { font: 700 10px "Open Sans", sans-serif; fill: #fff; text-anchor: middle; }
.sigma { font: 16px "Liberation Serif", serif; fill: #fff; }
.alpha { font: 9px "Liberation Serif", serif; fill: #fff; }

.tray {
	display: flex;
	margin-left: auto;
}

.weather {
	gap: 11px;
	margin-right: 12px;
	font-size: 13px;
}

.ti { width: 24px; }
.wifi { width: 27px; }
.kb { width: 30px; font-size: 13px; }

.clock {
	flex-direction: column;
	width: 64px;
	line-height: 17px;
}

.note { width: 50px; }

.peek {
	width: 5px;
	border-left: 1px solid #6d7b8b;
}

.watermark {
	position: absolute;
	left: 600px;
	top: 672px;
	width: 166px;
	display: flex;
	flex-direction: column;
	align-items: center;
	pointer-events: none;
	font-weight: 700;
	color: rgba(160, 160, 160, .45);
	z-index: 2;
}

.wm-ar {
	font-family: "DejaVu Sans", sans-serif;
	font-size: 42px;
	line-height: 52px;
}

.wm-en {
	font-family: "Liberation Sans", sans-serif;
	font-size: 27px;
	line-height: 28px;
}
```
